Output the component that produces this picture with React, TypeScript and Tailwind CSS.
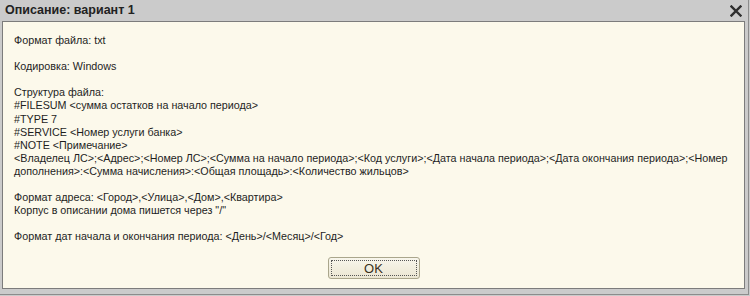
import React from 'react';

const lines: string[] = [
  'Формат файла: txt',
  '',
  'Кодировка: Windows',
  '',
  'Структура файла:',
  '#FILESUM <сумма остатков на начало периода>',
  '#TYPE 7',
  '#SERVICE <Номер услуги банка>',
  '#NOTE <Примечание>',
  '<Владелец ЛС>;<Адрес>;<Номер ЛС>;<Сумма на начало периода>;<Код услуги>;<Дата начала периода>;<Дата окончания периода>;<Номер',
  'дополнения>:<Сумма начисления>:<Общая площадь>:<Количество жильцов>',
  '',
  'Формат адреса: <Город>,<Улица>,<Дом>,<Квартира>',
  'Корпус в описании дома пишется через "/"',
  '',
  'Формат дат начала и окончания периода: <День>/<Месяц>/<Год>',
];

function CloseIcon() {
  return (
    <svg width="12" height="12" viewBox="0 0 12 12" className="block">
      <path d="M1.5 1.5 L10.5 10.5 M10.5 1.5 L1.5 10.5" stroke="#2e2e2e" strokeWidth="2.4" strokeLinecap="square" />
    </svg>
  );
}

export default function App() {
  return (
    <div className="w-[750px] h-[296px] bg-[#cbcbcb] font-['Liberation_Sans',Arial,sans-serif]">
      <div className="w-[749px] h-[295px] flex flex-col border-r border-b border-[#8c8c8c]">
        {/* title */}
        <div className="h-[21px] flex items-center justify-between pl-[5px] pr-[6px] shrink-0">
          <span className="text-[12.5px] font-bold text-[#222] leading-none">Описание: вариант 1</span>
          <CloseIcon />
        </div>

        <div className="flex-1 ml-[2px] mr-[3px] mb-[5px] border border-[#7c7c7c] bg-[#fcf9eb] flex flex-col">
          <div className="pl-[11px] pt-[12px] text-[10.75px] leading-[13px] text-[#1e1e1e]">
            {lines.map((l, i) => (
              <div key={i} className="h-[13.1px] whitespace-nowrap">
                {l}
              </div>
            ))}
          </div>
          <div className="flex-1" />
          <div className="flex justify-center pb-[9px]">
            <button className="w-[92px] h-[22px] rounded-[3px] border border-[#aaa68c] bg-gradient-to-b from-[#f8f6ec] to-[#ebe6d2] p-[2px]">
              <div className="w-full h-full border border-dotted border-[#555] flex items-center justify-center text-[13px] text-[#3a3020] leading-none">
                OK
              </div>
            </button>
          </div>
        </div>
      </div>
    </div>
  );
}
